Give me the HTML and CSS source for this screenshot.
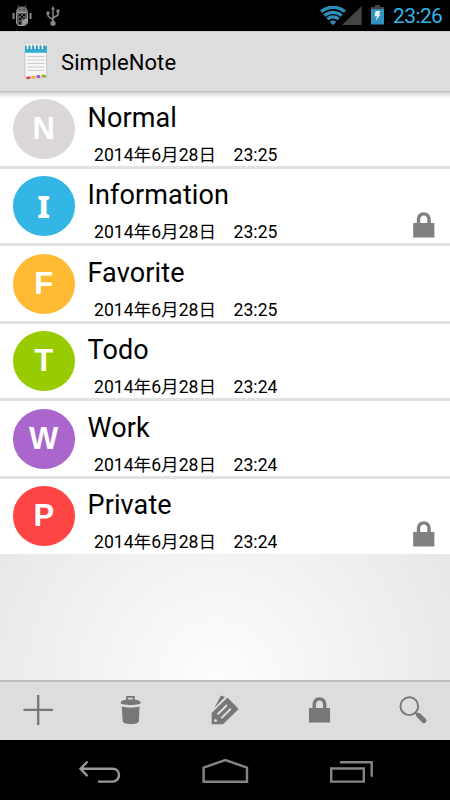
FILE: index.html
```html
<!DOCTYPE html>
<html lang="ja">
<head>
<meta charset="utf-8">
<title>SimpleNote</title>
<link rel="stylesheet" href="styles.css">
</head>
<body>
<svg class="defs" width="0" height="0">
  <symbol id="lock" viewBox="0 0 22 26"><path d="M0.2 11H3.8V8C3.8 3 7 0.3 10.8 0.3S17.8 3 17.8 8V11H21.4V25.6H0.2ZM7.2 11H14.4V8C14.4 5 13 3.4 10.8 3.4S7.2 5 7.2 8Z" fill-rule="evenodd"/></symbol>
</svg>
<header class="status">
  <svg class="droid" width="20" height="22" viewBox="0 0 20 22"><path d="M4.500 6.500C5 3.500 6.500 2 10 2S15 3.500 15.500 6.500ZM6 .5 7.500 3M14 .5 12.500 3" fill="#777" stroke="#777"/><path d="M4.500 7.500H15.500V18L13 20.500H6L4.500 18Z" fill="#555" stroke="#999"/><path d="M1.500 8V14M18.500 8V14" stroke="#888" stroke-width="2"/><path d="M7 9h2v2H7zM11 9h2v2h-2zM9 11h2v2H9zM7 13h2v2H7zM11 13h2v2h-2zM7 17h2v2H7z" fill="#111"/><path d="M10 20V15L15 13V18L12 20Z" fill="#999"/><circle cx="8" cy="4.500" r=".6"/><circle cx="12" cy="4.500" r=".6"/></svg>
  <svg class="usb" width="14" height="20" viewBox="0 0 14 20" fill="none" stroke="#888" stroke-width="1.500"><path d="M7 2V17M2 7V10L7 14M12 6V9L7 12"/><path d="M7 0 9 3.500H5ZM.5 5.500h3v3h-3zM10.500 3.500h3v3h-3z" fill="#888" stroke="none"/><circle cx="7" cy="17.300" r="2.600" fill="#888" stroke="none"/></svg>
  <span class="grow"></span>
  <svg class="signal" width="42" height="20" viewBox="0 0 42 20"><path d="M41.700 0V19H22Z" fill="#444"/><g fill="none" stroke="#2c8fb8" stroke-width="3.300"><path d="M1 5.600C8 -.1 18 -.1 25 5.600"/><path d="M4.300 9.500C9.500 5.300 16.500 5.300 21.700 9.500"/><path d="M7.400 13C10.800 10.200 15.200 10.200 18.600 13"/></g><path d="M9.700 15.800Q13 13.400 16.300 15.800L13 19.300Z" fill="#2c8fb8"/></svg>
  <svg class="battery" width="13" height="20" viewBox="0 0 13 20"><path d="M4 0H9V2H13V4.500H0V2H4Z" fill="#444"/><path d="M0 4H13V19.500H0Z" fill="#3193bd"/><path d="M4.600 6H9.500L7.800 9.300H9.800L4.700 15.800 6 11.200H3.500Z" fill="#e8f2f7"/></svg>
  <span class="clock">23:26</span>
</header>
<div class="appbar">
  <svg class="note" width="24" height="36" viewBox="0 0 24 36"><path d="M1 3H22L23 33.500H1Z" fill="#f6f6f6" stroke="#bbb" stroke-width=".7"/><path d="M1 2H23V8.800H1Z" fill="#36acd3"/><path d="M3.800 0V5M7.500 0V5M11.200 0V5M14.900 0V5M18.600 0V5" stroke="#f8f8f8" stroke-width="1.700"/><path d="M5 1V5.500M8.700 1V5.500M12.400 1V5.500M16.100 1V5.500M19.800 1V5.500" stroke="#347b91" stroke-width=".7"/><path d="M3.500 12.500H20.500M3.500 16H20.500M3.500 19.500H20.500M3.500 23H20.500M3.500 26.500H20.500" stroke="#c8c8c8" stroke-width=".9"/><path d="M2 33 6 32.300 6.500 34.800 3 35.200Z" fill="#dd3c46"/><path d="M7 32.300 11 31.700 11.500 34.300 8 34.800Z" fill="#efac2d"/><path d="M12 31.600 16 31 16.500 33.800 13 34.200Z" fill="#a05ac8"/><path d="M17 31 21 30.500 22.500 33 18.500 33.600Z" fill="#80b914"/></svg>
  <h1>SimpleNote</h1>
</div>
<main class="content">
  <ul class="notes">
    <li class="note-row"><span class="badge gray">N</span><div class="text"><h2>Normal</h2><p>2014年6月28日　23:25</p></div></li>
    <li class="note-row"><span class="badge blue">I</span><div class="text"><h2>Information</h2><p>2014年6月28日　23:25</p></div><svg class="lock" width="22" height="26"><use href="#lock"/></svg></li>
    <li class="note-row"><span class="badge orange">F</span><div class="text"><h2>Favorite</h2><p>2014年6月28日　23:25</p></div></li>
    <li class="note-row"><span class="badge green">T</span><div class="text"><h2>Todo</h2><p>2014年6月28日　23:24</p></div></li>
    <li class="note-row"><span class="badge purple">W</span><div class="text"><h2>Work</h2><p>2014年6月28日　23:24</p></div></li>
    <li class="note-row"><span class="badge red">P</span><div class="text"><h2>Private</h2><p>2014年6月28日　23:24</p></div><svg class="lock" width="22" height="26"><use href="#lock"/></svg></li>
  </ul>
</main>
<nav class="toolbar">
  <svg width="32" height="32" viewBox="0 0 32 32"><path d="M1.500 15.900H31M16.200 1V31" stroke="#777" stroke-width="2.300"/></svg>
  <svg width="32" height="32" viewBox="0 0 32 32" fill="#777"><path d="M11.200 6V2H19.800V6H17.800V3.800H13.200V6Z"/><path d="M5.700 9.300C5.700 6 10 5.500 15.700 5.500S25.700 6 25.700 9.300C24 11.500 7.500 11.500 5.700 9.300Z"/><path d="M6.800 12.600C12 14 19.500 14 24.600 12.600L23.800 27.500C22.500 31 9 31 7.700 27.500Z"/></svg>
  <svg width="32" height="32" viewBox="0 0 32 32"><path d="M5.200 14 12 1.500 16 3Z" fill="#777"/><path d="M2.600 19 18.500 3.600 29.700 15 14 30.300H2.600Z" fill="#777"/><path d="M8.500 20.500 18 11M12.300 24.200 21.800 14.800" stroke="#ddd" stroke-width="1.900"/><circle cx="6.500" cy="26.500" r="1.500" fill="#ddd"/></svg>
  <svg width="32" height="32" viewBox="0 0 32 32" fill="#777"><use href="#lock" x="5.700" y="3" width="22" height="26"/></svg>
  <svg width="32" height="32" viewBox="0 0 32 32" fill="none" stroke="#777"><circle cx="12.300" cy="12.200" r="8.900" stroke-width="1.900"/><path d="M18.300 18.300 21.500 21.500" stroke-width="2"/><path d="M21.500 21.300 27 26.600" stroke-width="5" stroke-linecap="round"/></svg>
</nav>
<footer class="sysnav">
  <svg width="44" height="26" viewBox="0 0 44 26"><path d="M10.500 3.500 3.500 10.800 10.500 18.100M3.500 10.800H35.500C39.500 10.800 42 13.500 42 17S39.500 23.600 35.500 23.600H21" fill="none" stroke="#999" stroke-width="2.400"/></svg>
  <svg width="48" height="26" viewBox="0 0 48 26"><path d="M2.600 23.700V9.600L24.300 2 46 9.600V23.700Z" fill="none" stroke="#858585" stroke-width="2.400"/></svg>
  <svg width="44" height="26" viewBox="0 0 44 26"><path d="M2.200 10.500H34.800V23.600H2.200ZM11 4.200H42.700V18.800" fill="none" stroke="#858585" stroke-width="2.400"/></svg>
</footer>
</body>
</html>
```
FILE: styles.css
```css
* { box-sizing: border-box; margin: 0; padding: 0; }
body {
  width: 450px; height: 800px; overflow: hidden;
  display: flex; flex-direction: column;
  background: #000; color: #000;
  font-family: Roboto, "Noto Sans CJK JP", sans-serif;
}
svg { display: block; flex: none; }
.defs { position: absolute; }
.status { height: 31px; flex: none; display: flex; align-items: flex-start; padding: 5px 7px 0 12px; }
.usb { margin: 1px 0 0 14px; }
.grow { flex: 1; }
.signal { margin: 1px 9px 0 0; }
.battery { margin-right: 9px; }
.clock { font-size: 21px; line-height: 22px; color: #33b5e5; width: 50px; letter-spacing: -.6px; white-space: nowrap; }
.appbar {
  height: 60.5px; flex: none; display: flex; align-items: center; padding-left: 23.500px;
  background: #ddd; border-top: 1px solid #cfcfcf; border-bottom: 1px solid #bcbcbc;
}
.note { margin-top: 2px; }
.appbar h1 { font-size: 22px; font-weight: 400; margin: 3px 0 0 13.500px; line-height: 26px; letter-spacing: .1px; }
.content {
  height: 588.5px; flex: none;
  background: radial-gradient(circle 270px at 218px 588px, #fdfdfd, #e7e7e7);
}
.notes { list-style: none; position: relative; }
.notes::before {
  content: ""; position: absolute; z-index: 1; inset: 0 0 auto 0; height: 6px;
  background: linear-gradient(rgba(0,0,0,.18), transparent);
}
.note-row { height: 77.5px; display: flex; background: linear-gradient(#fff 74.5px, #e2e2e2 74.5px, #e2e2e2 77px, #fff 77px); padding: 7px 15.500px 0 12.500px; }
.note-row:last-child { height: 75px; background: #fff; }
.badge {
  width: 62.500px; height: 60px; flex: none; border-radius: 50%;
  display: flex; align-items: center; justify-content: center;
  color: #fff; font: 700 31px/60px "Liberation Sans", sans-serif;
}
.gray { background: #ddd8d8; }
.blue { background: #33b5e5; font-family: "Noto Sans", sans-serif; font-weight: 800; }
.orange { background: #fb3; }
.green { background: #9c0; }
.purple { background: #a6c; }
.red { background: #f44; }
.text { flex: 1; padding-left: 12.5px; white-space: nowrap; }
.text h2 { font-size: 27px; font-weight: 400; line-height: 32px; margin-top: 3px; letter-spacing: .12px; }
.text p { font-size: 17.600px; line-height: 24px; margin: 9px 0 0 6.500px; }
.lock { align-self: flex-end; margin-bottom: 9px; fill: #808080; }
.note-row:last-child .lock { margin-bottom: 7px; }
.toolbar {
  height: 60px; flex: none; background: #ddd; border-top: 2px solid #bebebe;
  display: flex; justify-content: space-between; align-items: center; padding: 0 21.500px 2px;
}
.sysnav { height: 60px; flex: none; display: flex; justify-content: space-between; padding: 18px 77px 0 77px; }
```
